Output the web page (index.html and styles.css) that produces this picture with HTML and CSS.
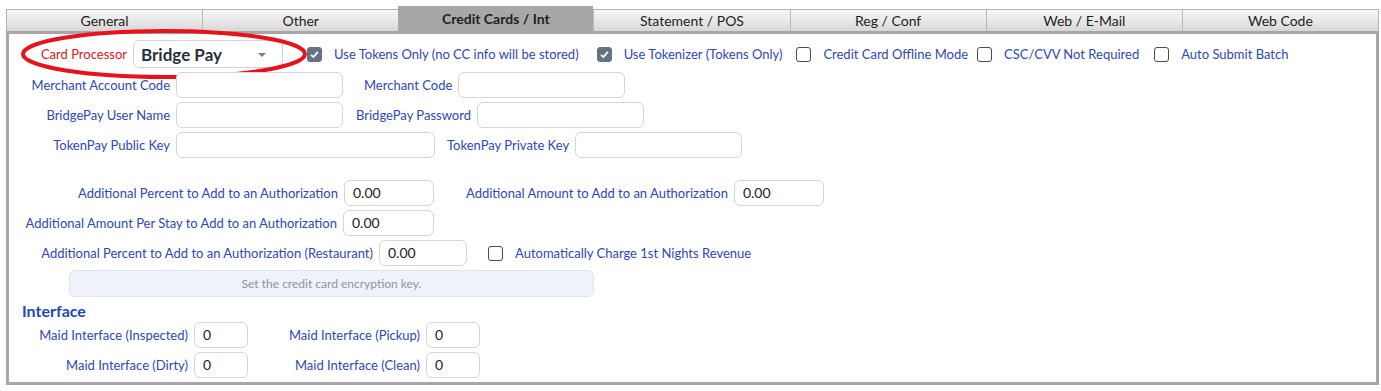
FILE: index.html
```html
<!DOCTYPE html>
<html>
<head>
<meta charset="utf-8">
<link rel="stylesheet" href="styles.css">
</head>
<body>
<div class="wrap">
  <div class="tabs">
    <div class="tab">General</div>
    <div class="tab">Other</div>
    <div class="tab active">Credit Cards / Int</div>
    <div class="tab">Statement / POS</div>
    <div class="tab">Reg / Conf</div>
    <div class="tab">Web / E-Mail</div>
    <div class="tab">Web Code</div>
  </div>
  <div class="panel">
    <div class="row row-top">
      <label class="lbl lbl-a red">Card Processor</label>
      <div class="select"><span>Bridge Pay</span><i class="caret"></i></div>
      <div class="chk on first"></div><span class="clbl">Use Tokens Only (no CC info will be stored)</span>
      <div class="chk on"></div><span class="clbl">Use Tokenizer (Tokens Only)</span>
      <div class="chk c3"></div><span class="clbl">Credit Card Offline Mode</span>
      <div class="chk c4"></div><span class="clbl">CSC/CVV Not Required</span>
      <div class="chk c5"></div><span class="clbl">Auto Submit Batch</span>
      <svg class="ring" width="292" height="54" viewBox="0 0 292 54"><ellipse cx="146" cy="27" rx="141" ry="23" fill="none" stroke="#e8121b" stroke-width="4"/></svg>
    </div>
    <div class="row">
      <label class="lbl lbl-b">Merchant Account Code</label>
      <div class="inp w167"></div>
      <label class="lbl2">Merchant Code</label>
      <div class="inp w167"></div>
    </div>
    <div class="row">
      <label class="lbl lbl-b">BridgePay User Name</label>
      <div class="inp w167"></div>
      <label class="lbl2 m13">BridgePay Password</label>
      <div class="inp w167"></div>
    </div>
    <div class="row">
      <label class="lbl lbl-b">TokenPay Public Key</label>
      <div class="inp w259"></div>
      <label class="lbl2 m12">TokenPay Private Key</label>
      <div class="inp w167"></div>
    </div>
    <div class="row row-gap">
      <label class="lbl lbl-c">Additional Percent to Add to an Authorization</label>
      <div class="inp w90">0.00</div>
      <label class="lbl2 m32">Additional Amount to Add to an Authorization</label>
      <div class="inp w90">0.00</div>
    </div>
    <div class="row">
      <label class="lbl lbl-d">Additional Amount Per Stay to Add to an Authorization</label>
      <div class="inp w91">0.00</div>
    </div>
    <div class="row">
      <label class="lbl lbl-e">Additional Percent to Add to an Authorization (Restaurant)</label>
      <div class="inp w87">0.00</div>
      <div class="chk m20"></div><span class="clbl">Automatically Charge 1st Nights Revenue</span>
    </div>
    <div class="btn">Set the credit card encryption key.</div>
    <h3 class="head">Interface</h3>
    <div class="row">
      <label class="lbl lbl-f">Maid Interface (Inspected)</label>
      <div class="inp w54">0</div>
      <label class="lbl lbl-g">Maid Interface (Pickup)</label>
      <div class="inp w54">0</div>
    </div>
    <div class="row">
      <label class="lbl lbl-f">Maid Interface (Dirty)</label>
      <div class="inp w54">0</div>
      <label class="lbl lbl-g">Maid Interface (Clean)</label>
      <div class="inp w54">0</div>
    </div>
  </div>
</div>
</body>
</html>
```
FILE: styles.css
```css
* { box-sizing: border-box; }
body {
  margin: 0;
  background: #fff;
  font-family: Lato, "Open Sans", sans-serif;
  font-size: 13px;
  color: #2e48b8;
}
.wrap {
  margin: 9px 0 0 6px;
  width: 1373px;
}
.tabs {
  display: flex;
  height: 22px;
}
.tab {
  flex: 1;
  text-align: center;
  font-size: 14px;
  line-height: 21px;
  color: #1e1e1e;
  background: linear-gradient(#f6f6f6, #e2e2e2 70%, #d6d6d6);
  border-top: 1px solid #b4b4b4;
  border-left: 1px solid #b9b9b9;
}
.tab:first-child { border-left: 1px solid #b4b4b4; }
.tab:last-child { border-right: 1px solid #b4b4b4; }
.tab.active {
  margin-top: -3px;
  height: 25px;
  line-height: 25px;
  background: #a9a6a8;
  border: none;
  font-weight: bold;
}
.panel {
  border: 3px solid #a9a6a8;
  height: 354px;
  padding-top: 6px;
}
.row {
  display: flex;
  align-items: center;
  height: 26px;
  margin-bottom: 4px;
  position: relative;
}
.row-top { height: 28px; margin-bottom: 4px; }
.row-gap { margin-top: 22px; }
.lbl {
  text-align: right;
  margin-right: 6px;
  white-space: nowrap;
  flex: none;
}
.lbl-a { width: 118px; }
.lbl-b { width: 161px; }
.lbl-c { width: 329px; }
.lbl-d { width: 328px; }
.lbl-e { width: 364px; }
.lbl-f { width: 179px; }
.lbl-g { width: 167px; margin-left: 5px; }
.lbl2 { margin-left: 21px; margin-right: 6px; white-space: nowrap; }
.m13 { margin-left: 13px; }
.m12 { margin-left: 12px; }
.m32 { margin-left: 32px; }
.red { color: #e8141c; }
.select {
  width: 150px;
  height: 28px;
  border: 1px solid #d4d4d8;
  border-radius: 6px;
  display: flex;
  align-items: center;
  padding-left: 7px;
  font-size: 17px;
  font-weight: bold;
  color: #2a2f3a;
  position: relative;
  flex: none;
}
.caret {
  position: absolute;
  right: 16px;
  top: 12px;
  width: 0;
  height: 0;
  border-left: 4px solid transparent;
  border-right: 4px solid transparent;
  border-top: 4px solid #7a7f88;
}
.ring {
  position: absolute;
  left: 9px;
  top: -13px;
  pointer-events: none;
}
.chk {
  width: 15px;
  height: 15px;
  border: 1px solid #4c4c4c;
  border-radius: 3px;
  margin-left: 18px;
  flex: none;
  background: #fff;
}
.chk.first { margin-left: 24px; }
.chk.c3 { margin-left: 14px; }
.chk.c4 { margin-left: 9px; }
.chk.c5 { margin-left: 15px; }
.chk.on {
  border-color: #657286;
  background: #657286 url("data:image/svg+xml;utf8,<svg xmlns='http://www.w3.org/2000/svg' width='15' height='15' viewBox='0 0 15 15'><path d='M3.5 7.8 L6.2 10.4 L11.4 4.4' fill='none' stroke='white' stroke-width='2'/></svg>") center/13px 13px no-repeat;
}
.chk.m20 { margin-left: 21px; }
.clbl { margin-left: 12px; white-space: nowrap; }
.inp {
  height: 26px;
  border: 1px solid #d3d6de;
  border-radius: 6px;
  background: #fff;
  flex: none;
  font-size: 14px;
  color: #222;
  padding-left: 8px;
  line-height: 24px;
}
.w167 { width: 167px; }
.w259 { width: 259px; }
.w90 { width: 90px; }
.w91 { width: 91px; }
.w87 { width: 88px; }
.w54 { width: 54px; }
.btn {
  margin: 3px 0 0 60px;
  width: 525px;
  height: 27px;
  border: 1px solid #dfe5ee;
  border-radius: 6px;
  background: #eff2f8;
  color: #8c95a7;
  font-size: 12px;
  text-align: center;
  line-height: 25px;
}
.head {
  margin: 4px 0 0 13px;
  font-size: 16px;
  font-weight: bold;
  color: #2446b6;
  line-height: 20px;
  height: 21px;
}
```
